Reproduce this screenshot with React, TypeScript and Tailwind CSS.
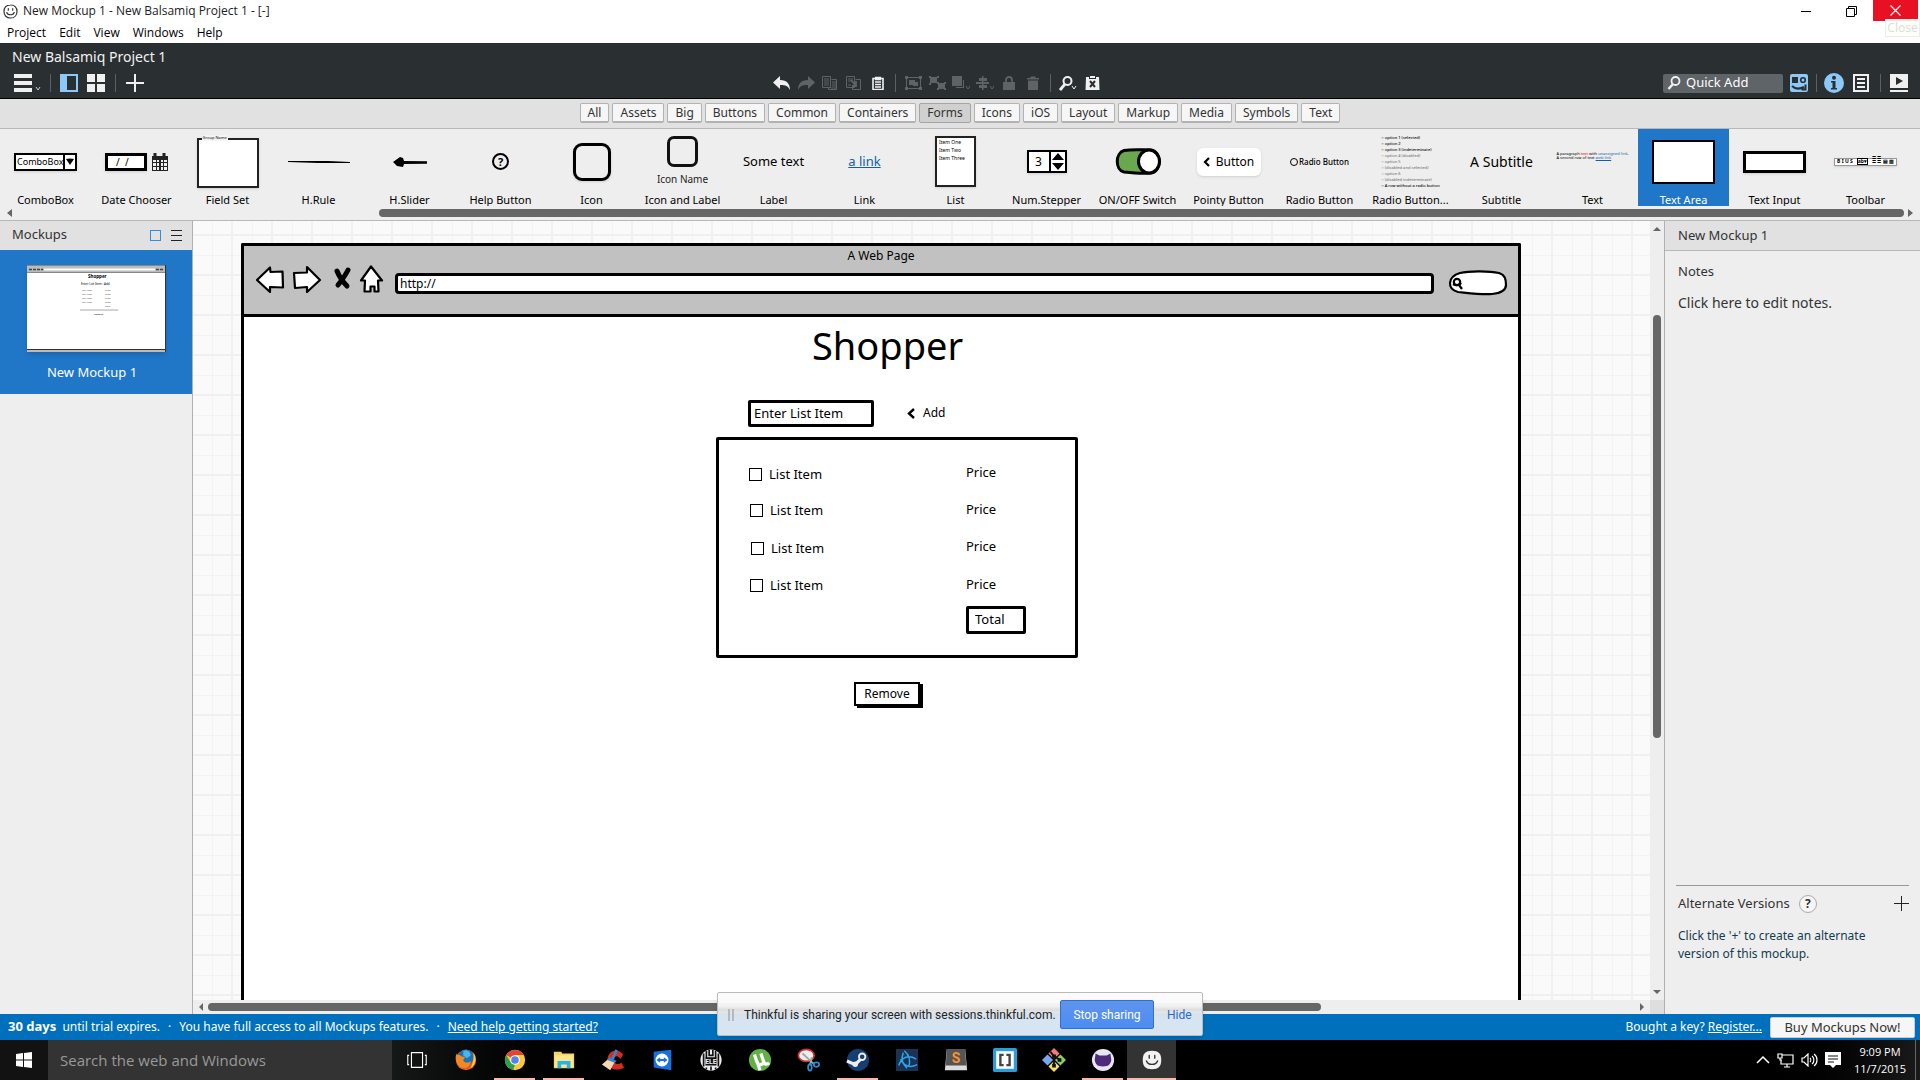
import React from "react";

type Children = { children?: React.ReactNode };

/* ---------- window chrome ---------- */

function SmileIcon() {
  return (
    <svg width="15" height="15" viewBox="0 0 15 15" fill="none" stroke="#333" strokeWidth="1.2">
      <path d="M7.5 1C11.5 .8 14 3.5 14 7.4S11.500 14 7.500 14 1 11.400 1 7.500 3.600 1.100 7.500 1Z" />
      <path d="M5.300 4.500v1.700M9.700 4.500v1.700M3.800 8.500c1 3 6.300 3 7.400 0" strokeLinecap="round" />
    </svg>
  );
}

function TitleBar() {
  return (
    <div className="flex h-[22px] shrink-0 items-center bg-white pl-[3px] font-['Open_Sans',sans-serif] text-[12px] text-[#222]">
      <SmileIcon />
      <span className="ml-[5px] flex-1">New Mockup 1 - New Balsamiq Project 1 - [-]</span>
      <button aria-label="Minimize" className="flex h-full w-[46px] items-center justify-center">
        <span className="h-px w-[10px] bg-black" />
      </button>
      <button aria-label="Restore" className="flex h-full w-[44px] items-center justify-center">
        <svg width="11" height="11" viewBox="0 0 11 11" fill="none" stroke="#000">
          <path d="M.5 2.500h8v8h-8zM2.500 2.500v-2h8v8h-2" />
        </svg>
      </button>
      <div className="relative mr-[2px] h-full w-[45px]">
        <button aria-label="Close window" className="flex h-[21px] w-full items-center justify-center bg-[#e81123]">
          <svg width="11" height="11" viewBox="0 0 11 11" stroke="#fff" strokeWidth="1.100">
            <path d="M.5.5l10 10M10.500.5l-10 10" />
          </svg>
        </button>
        <div className="absolute -right-[2px] top-[19px] flex h-[18px] w-[35px] items-center justify-center border border-[#ececec] bg-[#fffffa]/90 text-[12px] text-[#dcdcdc]">
          Close
        </div>
      </div>
    </div>
  );
}

function MenuBar() {
  return (
    <nav className="flex h-[21px] shrink-0 items-center gap-[13px] bg-white pl-[7px] font-['Open_Sans',sans-serif] text-[12px] text-black">
      {["Project", "Edit", "View", "Windows", "Help"].map((m) => (
        <button key={m}>{m}</button>
      ))}
    </nav>
  );
}

/* ---------- dark toolbar ---------- */

function Separator() {
  return <span className="mx-[2px] h-[18px] w-px bg-[#5c6062]" />;
}

function Tool({ label, children }: Children & { label: string }) {
  return (
    <button aria-label={label} title={label} className="flex h-5 w-[18px] items-center justify-center">
      {children}
    </button>
  );
}

const dim = "#5f6365";
const lit = "#f0f0f0";
const blue = "#8cc8f8";

function LeftTools() {
  return (
    <div className="flex flex-1 items-center">
      <button aria-label="Menu" className="flex items-end">
        <svg width="28" height="18" viewBox="0 0 28 18">
          <path d="M0 0h18v4H0zM0 7h18v4H0zM0 14h18v4H0z" fill={lit} />
          <path d="M22 13l2 3 2-3" fill="none" stroke="#ccc" />
        </svg>
      </button>
      <span className="ml-[6px] flex"><Separator /></span>
      <div className="ml-[7px] flex gap-[9px]">
        <Tool label="Navigator">
          <svg width="18" height="18" viewBox="0 0 18 18">
            <path d="M0 0h18v18H0z" fill={blue} />
            <path d="M7 2h9v14H7z" fill="#2a2f31" />
          </svg>
        </Tool>
        <Tool label="Grid">
          <svg width="18" height="18" viewBox="0 0 18 18" fill={lit}>
            <path d="M0 0h8v8H0zM10 0h8v8h-8zM0 10h8v8H0zM10 10h8v8h-8z" />
          </svg>
        </Tool>
      </div>
      <span className="ml-2 flex"><Separator /></span>
      <span className="ml-2 flex">
        <Tool label="New mockup">
          <svg width="18" height="18" viewBox="0 0 18 18" fill={lit}>
            <path d="M8 0h2v8h8v2h-8v8H8v-8H0V8h8z" />
          </svg>
        </Tool>
      </span>
    </div>
  );
}

function Undo({ flip, color }: { flip?: boolean; color: string }) {
  return (
    <svg width="18" height="15" viewBox="0 0 18 15" fill={color} className={flip ? "-scale-x-100" : ""}>
      <path d="M7 0v4c7 0 10 4 10 10-2-4-4-5-10-5v4L0 6.500z" />
    </svg>
  );
}

function CenterTools() {
  return (
    <div className="flex items-center gap-[6px] pr-12">
      <Tool label="Undo"><Undo color={lit} /></Tool>
      <Tool label="Redo"><Undo flip color={dim} /></Tool>
      <Tool label="Copy">
        <svg width="16" height="14" viewBox="0 0 16 14" fill="none" stroke={dim}>
          <path d="M.5.5h8v11h-8zM2 3h5M2 5h5M2 7h5M2 9h5M9.500 3.500h5v10h-8v-2M10 6h4M10 8h4M10 10h4M9 12h5" />
        </svg>
      </Tool>
      <Tool label="Duplicate">
        <svg width="16" height="14" viewBox="0 0 16 14" fill="none" stroke={dim}>
          <path d="M.5.5h8v11h-8zM2 3h5M2 5h5M2 9h3M9.500 3.500h5v10h-8v-2" />
          <path d="M5 4l5 6M10 5v5H6" strokeWidth="1.800" />
        </svg>
      </Tool>
      <Tool label="Paste">
        <svg width="12" height="14" viewBox="0 0 12 14" fill="none" stroke={lit}>
          <path d="M1 2.500h10v11H1z" strokeWidth="1.600" />
          <path d="M3.500 1.500h5v2h-5zM3 6h6M3 8.500h6M3 11h6" strokeWidth="1.300" />
        </svg>
      </Tool>
      <Separator />
      <Tool label="Group">
        <svg width="17" height="14" viewBox="0 0 17 14" fill={dim}>
          <path d="M1.500 1.500h14v11h-14z" fill="none" stroke={dim} />
          <path d="M0 0h3v3H0zM14 0h3v3h-3zM0 11h3v3H0zM14 11h3v3h-3zM4 4h6v5H4zM8 6h5v4H8z" />
        </svg>
      </Tool>
      <Tool label="Ungroup">
        <svg width="17" height="14" viewBox="0 0 17 14" fill={dim}>
          <path d="M1 1h7v6H1zM9 7h7v6H9z" />
          <path d="M0 0h2v2H0zM8 0h2v2H8zM0 7h2v2H0zM8 6h2v2H8zM15 6h2v2h-2zM8 12h2v2H8zM15 12h2v2h-2z" />
        </svg>
      </Tool>
      <Tool label="Arrange">
        <svg width="18" height="14" viewBox="0 0 18 14" fill={dim}>
          <path d="M0 0h10v10H0zM4 11h7V4h1v8H4z" />
          <path d="M14 10l2 3 2-3" fill="none" stroke={dim} />
        </svg>
      </Tool>
      <Tool label="Align">
        <svg width="18" height="14" viewBox="0 0 18 14" fill={dim}>
          <path d="M6 0h1.500v14H6zM3 2h8v3H3zM0 6h13v2H0zM3 9h8v3H3z" />
          <path d="M14 10l2 3 2-3" fill="none" stroke={dim} />
        </svg>
      </Tool>
      <Tool label="Lock">
        <svg width="12" height="14" viewBox="0 0 12 14" fill={dim}>
          <path d="M0 6h12v8H0z" />
          <path d="M3 6V4c0-4 6-4 6 0v2" fill="none" stroke={dim} strokeWidth="1.800" />
        </svg>
      </Tool>
      <Tool label="Delete">
        <svg width="12" height="14" viewBox="0 0 12 14" fill={dim}>
          <path d="M0 2h3.500V.5h5V2H12v1.500H0zM1 4.500h10V14H1z" />
        </svg>
      </Tool>
      <Separator />
      <Tool label="Zoom">
        <svg width="18" height="15" viewBox="0 0 18 15" fill="none" stroke={lit}>
          <circle cx="8.500" cy="5" r="4" strokeWidth="2" />
          <path d="M6 8L1 14" strokeWidth="2.800" />
          <path d="M13 10l2 3 2-3" />
        </svg>
      </Tool>
      <Tool label="Markup">
        <svg width="15" height="14" viewBox="0 0 15 14">
          <path d="M1 1h3v2h7V1h3l.5 13H.5zM5 0h5v2H5z" fill={lit} />
          <path d="M5 5l5 6M10 5l-5 6" stroke="#2a2f31" strokeWidth="2" />
        </svg>
      </Tool>
    </div>
  );
}

function RightTools() {
  return (
    <div className="flex flex-1 items-center justify-end pr-3">
      <label className="flex h-[19px] w-[120px] items-center rounded-xs bg-[#5f6468] pl-1">
        <svg width="14" height="14" viewBox="0 0 14 14" fill="none" stroke={lit}>
          <circle cx="8.500" cy="5" r="4" strokeWidth="1.800" />
          <path d="M6 8L1.500 13" strokeWidth="2.500" />
        </svg>
        <input
          aria-label="Quick Add"
          placeholder="Quick Add"
          className="ml-[5px] w-20 bg-transparent text-[13px] text-white outline-none placeholder:text-white"
        />
      </label>
      <span className="ml-[7px] flex">
        <Tool label="UI Library">
          <svg width="18" height="18" viewBox="0 0 18 18">
            <rect width="18" height="18" rx="2" fill={blue} />
            <path d="M2 3h6v6H2z" fill="#2a2f31" />
            <circle cx="13" cy="6" r="2.300" fill="none" stroke="#2a2f31" strokeWidth="1.600" />
            <path d="M2 12c4 4 8 3 12 1M15.500 10.500v5h-4" fill="none" stroke="#2a2f31" strokeWidth="2" />
          </svg>
        </Tool>
      </span>
      <span className="ml-[6px] flex"><Separator /></span>
      <button aria-label="Info" className="ml-[5px]">
        <svg width="20" height="20" viewBox="0 0 20 20">
          <circle cx="10" cy="10" r="10" fill={blue} />
          <circle cx="10" cy="4.800" r="2" fill="#2a2f31" />
          <path d="M7 8h4.500v7H13v1.500H7V15h1.500V9.500H7z" fill="#2a2f31" />
        </svg>
      </button>
      <span className="ml-2 flex">
        <Tool label="Notes">
          <svg width="16" height="18" viewBox="0 0 16 18" fill="none" stroke={lit} strokeWidth="2">
            <path d="M1 1h14v16H1zM4 5h8M4 9h8M4 13h8" />
          </svg>
        </Tool>
      </span>
      <span className="ml-2 flex"><Separator /></span>
      <span className="ml-[7px] flex">
        <Tool label="Present">
          <svg width="18" height="18" viewBox="0 0 18 18">
            <path d="M0 0h18v14H0zM0 16h18v2H0z" fill={lit} />
            <path d="M6 3l7 4-7 4z" fill="#2a2f31" />
          </svg>
        </Tool>
      </span>
    </div>
  );
}

function DarkHeader() {
  return (
    <header className="h-[56px] shrink-0 border-b border-black bg-[#2a2f31]">
      <h1 className="h-[29px] pl-3 text-[14px] leading-[28px] text-[#f2f2f2]">New Balsamiq Project 1</h1>
      <div className="flex h-[22px] items-center pl-[14px]">
        <LeftTools />
        <CenterTools />
        <RightTools />
      </div>
    </header>
  );
}

/* ---------- UI library ---------- */

const categories = [
  "All", "Assets", "Big", "Buttons", "Common", "Containers", "Forms", "Icons",
  "iOS", "Layout", "Markup", "Media", "Symbols", "Text",
];

function Categories() {
  return (
    <div className="flex h-[30px] shrink-0 items-center justify-center gap-[3px] border-b border-[#b8b8b8] bg-[#e1e1e1] pb-px">
      {categories.map((c) => (
        <button
          key={c}
          className={
            c === "Forms"
              ? "h-5 rounded-xs border border-[#a5a5a5] bg-[#d0d0d0] px-[7px] text-[12px] leading-[18px] text-[#333]"
              : "h-5 rounded-xs border border-b-2 border-[#b2b2b2] bg-[#f6f6f6] px-[7px] text-[12px] leading-[17px] text-[#333]"
          }
        >
          {c}
        </button>
      ))}
    </div>
  );
}

const radioLines = [
  { text: "option 1 (selected)", tone: "text-black" },
  { text: "option 2", tone: "text-black" },
  { text: "option 3 (indeterminate)", tone: "text-black" },
  { text: "option 4 (disabled)", tone: "text-[#777]" },
  { text: "option 5", tone: "text-[#777]" },
  { text: "(disabled and selected)", tone: "text-[#777]" },
  { text: "option 6", tone: "text-[#777]" },
  { text: "(disabled indeterminate)", tone: "text-[#777]" },
  { text: "A row without a radio button", tone: "text-black" },
];

const previews: { name: string; art: React.ReactNode }[] = [
  {
    name: "ComboBox",
    art: (
      <div className="flex h-[18px] w-[63px] border-2 border-black bg-white text-[9px] leading-[13px] shadow">
        <span className="flex-1 pl-px">ComboBox</span>
        <span className="flex w-[13px] items-center justify-center border-l-2 border-black">
          <svg width="8" height="7" viewBox="0 0 8 7"><path d="M0 1l4-.5L8 1 6 4 4 7 2 4z" /></svg>
        </span>
      </div>
    ),
  },
  {
    name: "Date Chooser",
    art: (
      <div className="flex items-center gap-[5px]">
        <span className="h-[18px] w-[42px] border-[3px] border-black bg-white pl-2 text-[10px] leading-[12px] shadow">/ &nbsp;/</span>
        <svg width="16" height="18" viewBox="0 0 16 18">
          <path d="M0 3h16v15H0z" fill="#222" />
          <path d="M3 0v5M12 0v5" stroke="#222" strokeWidth="3" />
          <path d="M1 7h3v2H1zM5 7h2v2H5zM9 7h2v2H9zM12 7h3v2h-3zM1 10h3v3H1zM5 10h2v3H5zM9 10h2v3H9zM12 10h3v3h-3zM1 14h3v3H1zM5 14h2v3H5zM9 14h2v3H9zM12 14h3v3h-3z" fill="#eee" />
        </svg>
      </div>
    ),
  },
  {
    name: "Field Set",
    art: (
      <div className="relative mt-[2px] h-[50px] w-[62px] border-2 border-[#222] bg-white shadow">
        <span className="absolute -top-[5px] left-[3px] bg-[#f4f4f4] px-px text-[4px] leading-[6px]">Group Name</span>
      </div>
    ),
  },
  {
    name: "H.Rule",
    art: <svg width="62" height="4" viewBox="0 0 62 4"><path d="M0 1h40l22 1v1L30 3 0 2z" /></svg>,
  },
  {
    name: "H.Slider",
    art: <svg width="34" height="12" viewBox="0 0 34 12"><path d="M0 6l7-5 3 1 1 3 23 .2v2.600L11 8l-1 3-6-1z" /></svg>,
  },
  {
    name: "Help Button",
    art: <span className="flex size-[17px] items-center justify-center rounded-full border-2 border-black text-[11px] font-bold leading-none">?</span>,
  },
  { name: "Icon", art: <span className="h-[38px] w-[38px] rounded-[9px] border-[3px] border-black shadow" /> },
  {
    name: "Icon and Label",
    art: (
      <div className="flex flex-col items-center">
        <span className="h-[31px] w-[31px] rounded-[7px] border-[3px] border-[#111]" />
        <span className="mt-1 text-[10px] leading-4 text-[#222]">Icon Name</span>
      </div>
    ),
  },
  { name: "Label", art: <span className="text-[13px]">Some text</span> },
  { name: "Link", art: <span className="text-[13px] text-[#125ea8] underline">a link</span> },
  {
    name: "List",
    art: (
      <div className="h-[51px] w-[41px] border-2 border-[#222] bg-white pl-[2px] text-[5px] leading-[8px] shadow">
        Item One<br />Item Two<br />Item Three
      </div>
    ),
  },
  {
    name: "Num.Stepper",
    art: (
      <div className="flex h-[23px] w-[40px] border-2 border-black bg-white text-[12px] leading-[19px] shadow">
        <span className="flex-1 text-center">3</span>
        <svg width="16" height="19" viewBox="0 0 16 19"><path d="M0 0h2v19H0zM3 8l6-7 6 7zM3 11l6 7 6-7z" /></svg>
      </div>
    ),
  },
  {
    name: "ON/OFF Switch",
    art: (
      <svg width="46" height="27" viewBox="0 0 46 27" stroke="#000" strokeWidth="3">
        <path d="M9 2.500C18 1 28 2 36 2c11 2 11 21 0 23-9 1-18 0-27-1C0 22 0 5 9 2.500Z" fill="#6aa84f" />
        <ellipse cx="34" cy="13.500" rx="10.500" ry="11.500" fill="#fff" />
      </svg>
    ),
  },
  {
    name: "Pointy Button",
    art: (
      <div className="flex h-7 w-16 items-center justify-center gap-[6px] rounded-md bg-white text-[12px] shadow">
        <svg width="7" height="10" viewBox="0 0 7 10" fill="none" stroke="#000" strokeWidth="2.200"><path d="M6 1L2 5l4 4" /></svg>
        Button
      </div>
    ),
  },
  {
    name: "Radio Button",
    art: (
      <span className="flex items-center gap-px text-[8px] font-medium">
        <span className="size-2 rounded-full border border-black" />
        Radio Button
      </span>
    ),
  },
  {
    name: "Radio Button...",
    art: (
      <div className="flex flex-col text-[4px] font-medium leading-[6px]">
        {radioLines.map((r) => <span key={r.text} className={r.tone}>○ {r.text}</span>)}
      </div>
    ),
  },
  { name: "Subtitle", art: <span className="text-[14px]">A Subtitle</span> },
  {
    name: "Text",
    art: (
      <div className="mb-3 whitespace-nowrap text-[4px] leading-[4px]">
        A paragraph <span className="text-red-600">text</span> with <span className="text-[#125ea8]">unassigned link</span>.<br />
        A second row of text <span className="text-[#125ea8] underline">web link</span>
      </div>
    ),
  },
  { name: "Text Area", art: <span className="h-[44px] w-[63px] border-2 border-black bg-white" /> },
  { name: "Text Input", art: <span className="h-[22px] w-[63px] border-[3px] border-black bg-white shadow" /> },
  {
    name: "Toolbar",
    art: (
      <div className="flex h-2 w-[63px] items-center justify-around border border-[#999] bg-white text-[5px] font-bold leading-none shadow-sm">
        <span>B I U S</span><span className="border border-black">ab▾</span><span>≣ ≣ ▤ ▥</span>
      </div>
    ),
  },
];

function Library() {
  return (
    <section className="flex h-[92px] shrink-0 flex-col border-b border-[#b8b8b8] bg-[#eeeeee]">
      <div className="flex h-[77px] overflow-hidden">
        {previews.map((p) => (
          <button
            key={p.name}
            className={
              p.name === "Text Area"
                ? "flex w-[91px] shrink-0 flex-col items-center bg-[#2076c7] text-white"
                : "flex w-[91px] shrink-0 flex-col items-center text-black"
            }
          >
            <span className="flex h-[65px] items-center justify-center text-left">{p.art}</span>
            <span className="text-[11px] leading-[12px]">{p.name}</span>
          </button>
        ))}
      </div>
      <div className="flex flex-1 items-center px-[7px]">
        <span className="border-y-4 border-r-[5px] border-y-transparent border-r-[#666]" />
        <span className="flex-1" />
        <span className="h-2 w-4/5 rounded-full bg-[#666]" />
        <span className="ml-1 border-y-4 border-l-[5px] border-y-transparent border-l-[#666]" />
      </div>
    </section>
  );
}

/* ---------- left panel ---------- */

function Navigator() {
  return (
    <aside className="w-[193px] shrink-0 border-r border-[#b0b0b0] bg-[#eeeeee]">
      <div className="flex h-[29px] items-center bg-[#e1e1e1] pl-3 pr-[10px] text-[#333]">
        <h2 className="flex-1 pb-px text-[13px]">Mockups</h2>
        <button aria-label="Thumbnails" className="size-[11px] border border-[#2e90e5]" />
        <button aria-label="List" className="ml-[10px] flex flex-col gap-1">
          <span className="h-px w-[11px] bg-[#222]" />
          <span className="h-px w-[11px] bg-[#222]" />
          <span className="h-px w-[11px] bg-[#222]" />
        </button>
      </div>
      <button className="flex h-[144px] w-full flex-col items-center bg-[#2076c7] pt-[15px]">
        <svg width="139" height="87" viewBox="0 0 139 87" className="shadow-md" fontFamily="Noto Sans">
          <path d="M0 0h139v87H0z" fill="#fff" />
          <path d="M0 0h139v7H0zM0 85h139v2H0z" fill="#bbb" />
          <path d="M0 .5h139M0 7.500h139" stroke="#888" />
          <path d="M0 84.500h139M138.500 0v87" stroke="#333" />
          <path d="M17 4.500h111" stroke="#fff" strokeWidth="2" />
          <path d="M2 4.500h14M129 4.500h8" stroke="#444" strokeWidth="1.500" strokeDasharray="3 1" />
          <text x="61" y="13" fontSize="4.500" fontWeight="bold">Shopper</text>
          <text x="54" y="20" fontSize="3">Enter List Item  ‹ Add</text>
          {[26, 30, 34, 38].map((y) => (
            <g key={y} fontSize="2.400" fill="#444">
              <text x="55" y={y}>List Item</text>
              <text x="78" y={y}>Price</text>
            </g>
          ))}
          <text x="78" y="42" fontSize="2.400" fill="#444">Total</text>
          <path d="M53 45h38" stroke="#aaa" />
          <text x="67" y="50" fontSize="2.400">Remove</text>
        </svg>
        <span className="mt-[10px] pr-2 text-[13px] leading-5 text-white">New Mockup 1</span>
      </button>
    </aside>
  );
}

/* ---------- canvas ---------- */

function NavArrows() {
  return (
    <svg width="130" height="30" viewBox="0 0 130 30" fill="#fff" stroke="#000" strokeWidth="2.200" strokeLinejoin="round">
      <path d="M1 15L14 2.500l.5 4.500 12-.5.5 16-13-.5v5z" />
      <path d="M38 8l13-.5V2l13 13-13 12v-5l-12 1z" />
      <path d="M81 6c2 5 5 10 10 15M92 5c-3 6-6 10-10 15" strokeWidth="5" strokeLinecap="round" fill="none" />
      <path d="M115 1.500l11 14h-4l.5 11h-4v-5h-4v5h-6l.5-11h-4z" />
    </svg>
  );
}

function SearchBubble() {
  return (
    <svg width="60" height="26" viewBox="0 0 60 26" fill="none" stroke="#000" strokeWidth="2.200">
      <path d="M12 3C22 .5 42 1 51 3c6 2 7 6 7 12 0 5-4 8-14 9-10 1-24-1-34-2C-1 19-1 7 12 3Z" fill="#fff" />
      <circle cx="9" cy="12" r="3.200" />
      <path d="M5 14c3 2 7 1 8-1M11 15l3 4" />
    </svg>
  );
}

function BrowserBar() {
  return (
    <div className="h-[71px] border-b-[3px] border-black bg-[#c1c1c1]">
      <div className="h-[21px] text-center text-[12px] leading-5">A Web Page</div>
      <div className="flex h-[32px] items-center px-[10px]">
        <span className="mb-[6px] ml-[2px]"><NavArrows /></span>
        <input
          aria-label="Address"
          defaultValue="http://"
          className="ml-[9px] h-[21px] flex-1 rounded-sm border-[3px] border-black bg-white pl-[2px] text-[12px] outline-none"
        />
        <span className="ml-[14px]"><SearchBubble /></span>
      </div>
    </div>
  );
}

function CheckItem({ pos }: { pos: string }) {
  return (
    <label className={`absolute flex items-center gap-[7px] text-[13px] leading-4 ${pos}`}>
      <input type="checkbox" className="size-[13px] appearance-none border border-black bg-white" />
      List Item
    </label>
  );
}

function Sketch() {
  return (
    <div className="absolute bottom-0 left-12 top-[22px] w-[1280px] overflow-hidden rounded-t-xs border-x-[3px] border-t-[3px] border-black bg-white text-black">
      <BrowserBar />
      <h2 className="absolute left-[568px] top-[75px] text-[38px] leading-[48px]">Shopper</h2>
      <input
        aria-label="List item"
        defaultValue="Enter List Item"
        className="absolute left-[504px] top-[154px] h-[27px] w-[126px] rounded-[2px] border-[3px] border-black pb-[2px] pl-[3px] text-[13px] outline-none"
      />
      <button className="absolute left-[663px] top-[157px] flex items-center gap-2 text-[12px] leading-5">
        <svg width="8" height="11" viewBox="0 0 8 11" fill="none" stroke="#000" strokeWidth="2.400"><path d="M7 1L2 5.500 7 10" /></svg>
        Add
      </button>
      <div className="absolute left-[472px] top-[191px] h-[221px] w-[362px] rounded-[2px] border-[3px] border-black">
        <CheckItem pos="left-[30px] top-[26px]" />
        <CheckItem pos="left-[31px] top-[62px]" />
        <CheckItem pos="left-8 top-[100px]" />
        <CheckItem pos="left-[31px] top-[137px]" />
        <span className="absolute left-[247px] top-6 text-[13px] leading-4">Price</span>
        <span className="absolute left-[247px] top-[61px] text-[13px] leading-4">Price</span>
        <span className="absolute left-[247px] top-[98px] text-[13px] leading-4">Price</span>
        <span className="absolute left-[247px] top-[136px] text-[13px] leading-4">Price</span>
        <input
          aria-label="Total"
          defaultValue="Total"
          className="absolute left-[247px] top-[166px] h-7 w-[60px] rounded-[2px] border-[3px] border-black pb-[2px] pl-[6px] text-[13px] outline-none"
        />
      </div>
      <button className="absolute left-[610px] top-[436px] h-6 w-[66px] border-2 border-black bg-white text-[12px] leading-5 shadow-[3px_2px_0_#000]">
        Remove
      </button>
    </div>
  );
}

function Canvas() {
  return (
    <main className="flex min-w-0 flex-1 flex-col bg-[#eeeeee]">
      <div className="flex min-h-0 flex-1">
        <div className="relative min-w-0 flex-1 overflow-hidden bg-[#fafafa] bg-[linear-gradient(to_right,#f0f0f0_2px,transparent_2px),linear-gradient(to_bottom,#f0f0f0_2px,transparent_2px),linear-gradient(to_right,#f3f3f3_1px,transparent_1px),linear-gradient(to_bottom,#f3f3f3_1px,transparent_1px)] bg-[size:40px_40px] bg-[position:38px_0px,0px_13px,19px_0px,0px_34px]">
          <Sketch />
        </div>
        <div className="flex w-[14px] flex-col items-center py-[6px]">
          <span className="border-x-4 border-b-[4px] border-x-transparent border-b-[#666]" />
          <span className="h-[84px]" />
          <span className="h-[423px] w-2 rounded-full bg-[#666]" />
          <span className="flex-1" />
          <span className="border-x-4 border-t-[4px] border-x-transparent border-t-[#666]" />
        </div>
      </div>
      <div className="flex h-[14px] items-center">
        <div className="flex flex-1 items-center px-[6px]">
          <span className="border-y-4 border-r-[4px] border-y-transparent border-r-[#666]" />
          <span className="ml-[5px] h-2 w-[77%] rounded-full bg-[#666]" />
          <span className="flex-1" />
          <span className="border-y-4 border-l-[4px] border-y-transparent border-l-[#666]" />
        </div>
        <span className="h-full w-[14px] bg-[#dedede]" />
      </div>
    </main>
  );
}

/* ---------- right panel ---------- */

function Inspector() {
  return (
    <aside className="flex w-[256px] shrink-0 flex-col border-l border-[#b0b0b0] bg-[#eeeeee] text-[13px] text-[#333]">
      <h2 className="h-[30px] border-b border-[#b8b8b8] bg-[#e1e1e1] pl-[13px] leading-[29px]">New Mockup 1</h2>
      <div className="flex-1 pl-[13px] pt-[10px]">
        <h3 className="leading-5">Notes</h3>
        <p className="mt-3 text-[14px] leading-5">Click here to edit notes.</p>
      </div>
      <div className="mx-[11px] h-[129px] border-t border-[#999] pl-[2px]">
        <div className="flex h-[35px] items-center">
          <h3>Alternate Versions</h3>
          <button aria-label="Help" className="ml-[9px] flex size-[18px] items-center justify-center rounded-full border border-[#aaa] bg-[#f6f6f6] text-[12px] font-bold">?</button>
          <button aria-label="Add version" className="ml-auto">
            <svg width="15" height="15" viewBox="0 0 15 15" stroke="#222"><path d="M7.500 0v15M0 7.500h15" /></svg>
          </button>
        </div>
        <p className="mt-[6px] text-[12px] leading-[18px] text-[#143c50]">
          Click the '+' to create an alternate<br />version of this mockup.
        </p>
      </div>
    </aside>
  );
}

/* ---------- bottom bars ---------- */

function TrialBar() {
  return (
    <div className="relative flex h-[26px] shrink-0 items-center bg-[#0070bd] pl-2 pr-[5px] text-[12px] text-white">
      <p className="flex items-center gap-2">
        <span><b className="text-[13px]">30 days</b>&nbsp; until trial expires.</span>
        <span>·</span>
        <span>You have full access to all Mockups features.</span>
        <span>·</span>
        <a href="#help" className="underline">Need help getting started?</a>
      </p>
      <p className="ml-auto">
        Bought a key? <a href="#register" className="underline">Register...</a>
      </p>
      <button className="ml-2 h-[21px] w-[145px] rounded-xs border border-[#ccc] bg-[#f6f6f6] text-[13px] leading-[19px] text-[#333]">
        Buy Mockups Now!
      </button>
      <div className="absolute bottom-1 left-1/2 flex h-[44px] w-[486px] -translate-x-1/2 items-center rounded-xs border border-[#bbb] bg-linear-to-b from-[#fafafa]/95 from-30% via-[#e4e4e4]/95 via-40% to-[#d6e5f1] to-60% pt-px font-['Roboto',sans-serif] text-[12px] text-[#222] shadow-md">
        <span className="ml-[10px] h-3 w-[6px] border-x-2 border-[#b5b9bd]" />
        <span className="ml-[10px] w-[305px] whitespace-nowrap">
          Thinkful is sharing your screen with sessions.thinkful.com.
        </span>
        <button className="ml-[11px] h-[29px] w-[94px] rounded-xs border border-[#2f6fd4] bg-linear-to-b from-[#6094ec] to-[#4b8df2] text-white">Stop sharing</button>
        <button className="ml-[13px] text-[#2a6bc8]">Hide</button>
      </div>
    </div>
  );
}

const apps: { name: string; state?: "open" | "active"; art: React.ReactNode }[] = [
  {
    name: "Task View",
    art: <path d="M7 5h12v16H7zM4.500 8H3v10h1.500M21.500 8H23v10h-1.500" fill="none" stroke="#fff" strokeWidth="1.200" />,
  },
  {
    name: "Firefox",
    art: (
      <>
        <circle cx="13" cy="13" r="11" fill="#e2601d" />
        <circle cx="13" cy="10" r="8.500" fill="#1f6fb5" />
        <path d="M10 3c4-2 8 1 8 5l-4 3-4-3z" fill="#4bb5e8" />
        <path d="M21 5c4 6 3 13-3 17 2-5 4-10 3-17z" fill="#ffcb2b" />
        <path d="M3 6c0 2 3 1 5 3l4 1-2 3c1 4 6 3 8 1 0 5-5 9-10 7C3 19 0 11 3 6Z" fill="#f08a24" />
      </>
    ),
  },
  {
    name: "Chrome",
    state: "open",
    art: (
      <>
        <circle cx="13" cy="13" r="11" fill="#fcc934" />
        <path d="M13 13L3.500 7.500A11 11 0 0 1 22.500 7.500H13z" fill="#e0433a" />
        <path d="M3.500 7.500L8.500 16 13 18l-2 5.800A11 11 0 0 1 3.500 7.500z" fill="#2f9e4f" />
        <circle cx="13" cy="13" r="5.200" fill="#fff" />
        <circle cx="13" cy="13" r="4.100" fill="#4a86ee" />
      </>
    ),
  },
  {
    name: "File Explorer",
    state: "open",
    art: (
      <>
        <path d="M2 4h8l1 2h13v16H2z" fill="#f6d565" />
        <path d="M3 8h20v13H3z" fill="#fde48d" />
        <path d="M6 14h14v8h-4v-4h-6v4H6z" fill="#26b4ea" />
      </>
    ),
  },
  {
    name: "CCleaner",
    art: (
      <>
        <path d="M24 7c-6-8-17-4-17 6s10 13 18 8l-3-5c-4 3-8 1-8-3s4-6 7-1z" fill="#d42c22" />
        <path d="M17 2l-5 11" stroke="#2f86c9" strokeWidth="3" />
        <path d="M8 12l7 3-5 9-9-6z" fill="#f3d9b0" />
        <path d="M9 10l8 4-2 2-8-3z" fill="#2f86c9" />
      </>
    ),
  },
  {
    name: "TeamViewer",
    art: (
      <>
        <path d="M4 4l19-2v22L4 21z" fill="#1473e0" />
        <circle cx="13" cy="13" r="7" fill="#fff" />
        <path d="M7 13l4-3v2h4v-2l4 3-4 3v-2h-4v2z" fill="#1473e0" />
      </>
    ),
  },
  {
    name: "ELE",
    art: (
      <>
        <circle cx="13" cy="13" r="11.500" fill="#eee" />
        <path d="M8 3v8M18 3v8M11 2v6h4V2M5 6v14M21 6v14M8 21v2M13 20v4M18 21v2" stroke="#111" strokeWidth="1.800" fill="none" />
        <path d="M7 10h12v9H7z" fill="#111" />
        <text x="13" y="17.500" fontSize="7.500" fontWeight="bold" textAnchor="middle" fontFamily="Roboto" fill="#eee">ELE</text>
      </>
    ),
  },
  {
    name: "uTorrent",
    art: (
      <>
        <circle cx="13" cy="13" r="12" fill="#62b146" />
        <path d="M7 7l3 9c1 3 6 3 7-1l-3-9M17 15c1 3 4 3 6 1M10 15l3 9" stroke="#fff" strokeWidth="3.500" fill="none" />
      </>
    ),
  },
  {
    name: "Snipping Tool",
    art: (
      <>
        <ellipse cx="10" cy="8" rx="8.500" ry="6.500" fill="#eee" stroke="#cf3030" strokeWidth="1.800" />
        <path d="M6 6l13 12M14 19l2-9" stroke="#9aa" strokeWidth="2" />
        <ellipse cx="14" cy="21" rx="2" ry="3.500" fill="none" stroke="#2e8fd0" strokeWidth="1.800" />
        <ellipse cx="21" cy="18" rx="3" ry="2.400" fill="none" stroke="#2e8fd0" strokeWidth="1.800" />
      </>
    ),
  },
  {
    name: "Steam",
    state: "open",
    art: (
      <>
        <circle cx="13" cy="13" r="12" fill="#153f73" />
        <path d="M1 14l9 4 7-7" stroke="#eee" strokeWidth="3.500" fill="none" />
        <circle cx="17.500" cy="9.500" r="3.500" fill="#153f73" stroke="#eee" strokeWidth="2" />
        <circle cx="10" cy="17.500" r="3" fill="#eee" />
      </>
    ),
  },
  {
    name: "Battle.net",
    art: (
      <>
        <path d="M1 1h24v24H1z" fill="#1c3254" />
        <path d="M10 3c5 4 7 10 5 17M4 19c3-9 10-12 19-7M6 12c4 8 10 10 18 6M9 5c-3 7-1 12 4 17" stroke="#2ba8e8" strokeWidth="1.600" fill="none" />
      </>
    ),
  },
  {
    name: "Sublime Text",
    art: (
      <>
        <path d="M3 1h20l2 23H1z" fill="#ddd" />
        <path d="M3 1h20l1 18H2z" fill="#555" />
        <text x="13" y="16" fontSize="15" fontWeight="bold" textAnchor="middle" fontFamily="Roboto" fill="#f79332">S</text>
      </>
    ),
  },
  {
    name: "Brackets",
    art: (
      <>
        <rect x="0" y="0" width="26" height="26" rx="2" fill="#2a9ed8" />
        <path d="M3.500 3.500h19v19h-19z" fill="#fff" />
        <path d="M11.500 7.500H8v11h3.500M14.500 7.500H18v11h-3.500" stroke="#444" strokeWidth="2.600" fill="none" />
      </>
    ),
  },
  {
    name: "Git Bash",
    art: (
      <>
        <path d="M13 0l6 6-6 6-6-6z" fill="#f27b7b" />
        <path d="M6 7l6 6-6 6-6-6z" fill="#79a8f2" />
        <path d="M20 7l6 6-6 6-6-6z" fill="#8ccf5f" />
        <path d="M13 14l6 6-6 6-6-6z" fill="#f6e06a" />
        <path d="M9 4l4 5v10M13 8l6 5" stroke="#111" strokeWidth="2" fill="none" />
        <path d="M11 17h4v4h-4zM17 11h4v4h-4zM11 7h4v4h-4z" fill="#111" />
      </>
    ),
  },
  {
    name: "GitHub",
    state: "open",
    art: (
      <>
        <circle cx="13" cy="13" r="12" fill="#e8e6f4" />
        <path d="M5 6l4 2h8l4-2 1 7c-1 5-3 7-9 7s-8-2-9-7z" fill="#4d2a7c" />
      </>
    ),
  },
  {
    name: "Balsamiq Mockups",
    state: "active",
    art: (
      <>
        <path d="M13 3c7 0 10 3 10 10s-3 10-10 10S3 20 3 13 6 3 13 3Z" fill="#f2f2f2" />
        <path d="M10 8v3M16 8v3M7 14c2 5 10 5 12 0" stroke="#333" strokeWidth="1.500" fill="none" strokeLinecap="round" />
      </>
    ),
  },
];

function Taskbar() {
  return (
    <footer className="flex h-10 shrink-0 bg-black font-['Open_Sans',sans-serif] text-white">
      <button aria-label="Start" className="flex w-12 items-center justify-center bg-[#121212]">
        <svg width="16" height="16" viewBox="0 0 16 16" fill="#fff">
          <path d="M0 2l7-1v6.500H0zM8 1l8-1v7.500H8zM0 8.500h7V15l-7-1zM8 8.500h8V16l-8-1z" />
        </svg>
      </button>
      <input
        aria-label="Search the web and Windows"
        placeholder="Search the web and Windows"
        className="w-[344px] bg-[#333] px-3 text-[15px] outline-none placeholder:text-[#9a9a9a]"
      />
      <div className="flex bg-linear-to-r from-[#161818] to-black to-30%">
        {apps.map((a) => (
          <button
            key={a.name}
            aria-label={a.name}
            className={
              a.state === "active"
                ? "relative flex w-[49px] items-center justify-center bg-[#333]"
                : "relative flex w-[49px] items-center justify-center"
            }
          >
            <svg width="24" height="24" viewBox="0 0 26 26">{a.art}</svg>
            {a.state && (
              <span
                className={
                  a.state === "active"
                    ? "absolute inset-x-0 bottom-0 h-[2px] bg-[#fbb8b0]"
                    : "absolute inset-x-1 bottom-0 h-[2px] bg-[#fbb8b0]"
                }
              />
            )}
          </button>
        ))}
      </div>
      <div className="ml-auto flex items-center bg-linear-to-r from-black to-[#1a1a1a] pr-1">
        <div className="flex items-center gap-[7px]">
          <svg width="14" height="8" viewBox="0 0 14 8" fill="none" stroke="#fff" strokeWidth="1.500"><path d="M1 7l6-6 6 6" /></svg>
          <svg width="17" height="15" viewBox="0 0 17 15" fill="none" stroke="#fff" strokeWidth="1.200">
            <path d="M5 2h11v9H4V7M7 14h6M10 11v3M1 1h4v4H1zM3 5v2h2" />
          </svg>
          <svg width="17" height="14" viewBox="0 0 17 14" fill="none" stroke="#fff" strokeWidth="1.200">
            <path d="M1 5h2l4-4v12L3 9H1zM9 5c1 1 1 3 0 4M11 3c2.500 2 2.500 6 0 8M13 1c4 3 4 9 0 12" />
          </svg>
          <svg width="16" height="16" viewBox="0 0 16 16">
            <path d="M0 0h16v13h-5l-3 3-3-3H0z" fill="#fff" />
            <path d="M3 4h10M3 7h10M3 10h6" stroke="#111" />
          </svg>
        </div>
        <div className="ml-[13px] w-[52px] whitespace-nowrap text-center text-[11px] leading-[17px]">
          <div>9:09 PM</div>
          <div>11/7/2015</div>
        </div>
        <span className="ml-[9px] h-10 w-px bg-[#666]" />
      </div>
    </footer>
  );
}

export default function App() {
  return (
    <div className="flex h-screen flex-col overflow-hidden font-['Noto_Sans',sans-serif]">
      <TitleBar />
      <MenuBar />
      <DarkHeader />
      <Categories />
      <Library />
      <div className="flex min-h-0 flex-1">
        <Navigator />
        <Canvas />
        <Inspector />
      </div>
      <TrialBar />
      <Taskbar />
    </div>
  );
}
